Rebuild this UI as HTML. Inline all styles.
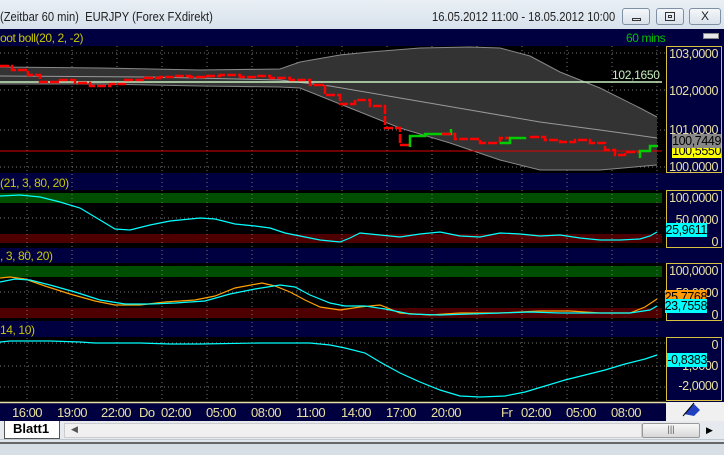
<!DOCTYPE html>
<html><head><meta charset="utf-8"><style>
*{margin:0;padding:0;box-sizing:border-box}
body{width:724px;height:455px;overflow:hidden;background:#dfe6ee;font-family:"Liberation Sans",sans-serif;position:relative}
.abs{position:absolute}
.title{left:0;top:0;width:724px;height:29px;background:linear-gradient(#e9eff5,#d8e2ec);font-size:13px;color:#222}
.title .t{transform:scaleX(0.86);transform-origin:left top;white-space:nowrap}
.btn{top:8px;width:28px;height:17px;border:1px solid #7f8fa4;border-radius:3px;background:linear-gradient(#f4f7fa,#d9e1ea)}
.hdr{background:#000040;color:#c8c800;font-size:12px;letter-spacing:-0.4px}
.ax{background:#000040;border:1px solid #d8c040;color:#e8e0a0;font-size:12.5px;letter-spacing:-0.4px}
.ax span{position:absolute;right:3px}
</style></head><body>
<div class="abs title">
 <div class="abs t" style="left:0;top:9px">(Zeitbar 60 min)&nbsp; EURJPY (Forex FXdirekt)</div>
 <div class="abs t" style="left:432px;top:9px">16.05.2012 11:00 - 18.05.2012 10:00</div>
 <div class="abs btn" style="left:622px"><div class="abs" style="left:9px;top:9px;width:9px;height:3px;border:1px solid #333"></div></div>
 <div class="abs btn" style="left:656px"><div class="abs" style="left:8px;top:3px;width:10px;height:9px;border:1px solid #333"><div style="margin:2px auto;width:4px;height:3px;border:1px solid #333"></div></div></div>
 <div class="abs btn" style="left:689px;width:32px;text-align:center;font-size:12px;line-height:15px">X</div>
</div>
<div class="abs" style="left:0;top:29px;width:724px;height:392px;background:#000040"></div>
<div class="abs hdr" style="left:0;top:31px;width:666px;height:15px;line-height:15px">oot boll(20, 2, -2)<span class="abs" style="left:626px;color:#00c000">60 mins</span></div>
<div class="abs" style="left:703px;top:33px;width:16px;height:6px;background:#e8e8e8;border:1px solid #888"></div>
<div class="abs hdr" style="left:0;top:176px;width:666px;height:14px;line-height:14px">(21, 3, 80, 20)</div>
<div class="abs hdr" style="left:0;top:250px;width:666px;height:13px;line-height:13px">, 3, 80, 20)</div>
<div class="abs hdr" style="left:0;top:324px;width:666px;height:13px;line-height:13px">14, 10)</div>

<svg class="abs" style="left:0;top:0" width="724" height="455">
<g fill="#000">
<rect x="0" y="46" width="666" height="127"/>
<rect x="0" y="190" width="666" height="58"/>
<rect x="0" y="263" width="666" height="58"/>
<rect x="0" y="337" width="666" height="65"/>
</g>
<rect x="0" y="193" width="662" height="10" fill="#004e00"/>
<rect x="0" y="234" width="662" height="9" fill="#4e0000"/>
<rect x="0" y="266" width="662" height="11" fill="#004e00"/>
<rect x="0" y="308" width="662" height="10" fill="#4e0000"/>
<g stroke="#777" stroke-dasharray="1,3" stroke-width="1">
<path d="M27 46V402M72 46V402M117 46V402M162 46V402M207 46V402M252 46V402M297 46V402M342 46V402M387 46V402M432 46V402M477 46V402M522 46V402M567 46V402M612 46V402M657 46V402"/>
<path d="M0 53H666M0 90H666M0 130H666M0 167H666M0 218H666M0 292H666M0 343H666M0 366H666M0 387H666"/>
</g>
<path d="M0 67 L100 68 L200 70 L280 69 L300 62 L340 55 L370 52 L420 48 L470 47 L500 48 L530 56 L560 72 L600 88 L640 108 L657 117 L657 165 L600 170 L540 170 L500 160 L450 143 L400 128 L370 116 L330 100 L300 88 L280 87 L200 86 L100 84 L0 84 Z" fill="#333"/>
<path d="M0 67 L100 68 L200 70 L280 69 L300 62 L340 55 L370 52 L420 48 L470 47 L500 48 L530 56 L560 72 L600 88 L640 108 L657 117" fill="none" stroke="#888"/>
<path d="M0 84 L100 84 L200 86 L280 87 L300 88 L330 100 L370 116 L400 128 L450 143 L500 160 L540 170 L600 170 L657 165" fill="none" stroke="#888"/>
<path d="M0 76 L150 77 L280 80 L330 86 L400 98 L470 110 L540 122 L600 130 L657 138" fill="none" stroke="#999"/>
<path d="M0 82H662" stroke="#c8f0c0" stroke-width="1.5"/>
<path d="M0 151H662" stroke="#e00000"/>
<path d="M0 66H12V70H28V75H40V82H60V80H75V83H90V86H110V84H125V80H145V78H160V77H175V76H190V77H205V76H220V75H240V77H255V76H270V78H290V80H310V85H325V95H340V104H355V100H370V106H385V128H400V145H410" fill="none" stroke="#f00" stroke-width="2.5" stroke-dasharray="9,2"/>
<path d="M410 147V136H425V134H440V134H451V129" fill="none" stroke="#0c0" stroke-width="2.5"/>
<path d="M442 134H455V139H480V143H500V138H512" fill="none" stroke="#f00" stroke-width="2.5" stroke-dasharray="9,2"/>
<path d="M500 143H510V138H525V137" fill="none" stroke="#0c0" stroke-width="2.5"/>
<path d="M530 137H545V140H560V142H575V140H590V143H605V150H615V155H625V152H640" fill="none" stroke="#f00" stroke-width="2.5" stroke-dasharray="9,2"/>
<path d="M640 158V151H650V146H658" fill="none" stroke="#0c0" stroke-width="2.5"/>
<path d="M0 196L20 195L40 197L60 202L80 208L100 220L115 229L130 230L150 225L170 221L200 218L215 219L235 224L255 226L270 228L285 233L305 237L320 240L340 242L350 238L360 233L380 235L400 237L420 234L440 232L460 236L480 237L500 233L520 234L540 236L560 235L580 238L600 240L620 240L640 239L650 236L657 232" fill="none" stroke="#0ff" stroke-width="1.2"/>
<path d="M0 278L10 277L25 279L45 286L70 294L95 301L115 305L140 305L165 302L195 300L215 296L235 288L262 283L275 286L290 292L305 300L320 307L340 310L360 307L380 305L400 313L430 315L460 313L500 313L540 311L570 311L600 313L630 313L645 307L657 299" fill="none" stroke="#ffa000" stroke-width="1.2"/>
<path d="M0 282L15 279L30 280L50 285L75 292L100 300L125 304L150 304L175 303L205 301L230 294L255 289L280 285L295 287L310 295L330 303L345 306L365 306L385 309L410 314L440 315L470 314L500 313L530 312L560 313L600 313L630 313L650 310L657 306" fill="none" stroke="#0ff" stroke-width="1.2"/>
<path d="M0 342L10 341L50 341L80 342L95 343L140 343L170 344L200 344L260 343L310 343L330 345L345 348L365 353L380 362L400 373L420 382L440 390L460 396L480 397L505 396L525 392L545 386L565 380L585 375L605 370L625 364L645 359L657 355" fill="none" stroke="#0ff" stroke-width="1.2"/>
<path d="M0 402.5H666" stroke="#e8e0a0" stroke-width="1.5"/>
<rect x="666" y="402" width="58" height="19" fill="#f0f0f0"/>
<path d="M684 414L694 404L700 410L694 416Z" fill="#2040c0"/><path d="M683 416L694 403" stroke="#000"/>
</svg>

<div class="abs" style="left:0;top:405px;width:666px;font-size:13px;color:#e8e0a0;letter-spacing:-0.5px;white-space:nowrap">
<span class="abs" style="left:12px">16:00</span><span class="abs" style="left:57px">19:00</span><span class="abs" style="left:101px">22:00</span><span class="abs" style="left:139px">Do</span><span class="abs" style="left:161px">02:00</span><span class="abs" style="left:206px">05:00</span><span class="abs" style="left:251px">08:00</span><span class="abs" style="left:296px">11:00</span><span class="abs" style="left:341px">14:00</span><span class="abs" style="left:386px">17:00</span><span class="abs" style="left:431px">20:00</span><span class="abs" style="left:501px">Fr</span><span class="abs" style="left:521px">02:00</span><span class="abs" style="left:566px">05:00</span><span class="abs" style="left:611px">08:00</span>
</div>
<div class="abs" style="left:612px;top:68px;font-size:12px;color:#c8f0c0;letter-spacing:-0.3px">102,1650</div>

<div class="abs ax" style="left:666px;top:46px;width:56px;height:127px">
<span style="top:0">103,0000</span><span style="top:37px">102,0000</span><span style="top:76px">101,0000</span><span style="top:113px">100,0000</span>
<span style="top:97px;right:0;background:#ff0;color:#000">100,5550</span>
<span style="top:87px;right:0;background:#888;color:#000">100,7449</span>
</div>
<div class="abs ax" style="left:666px;top:190px;width:56px;height:58px">
<span style="top:0">100,0000</span><span style="top:22px">50,0000</span><span style="top:44px">0</span>
<span style="top:32px;right:14px;background:#0ff;color:#000">25,9611</span>
</div>
<div class="abs ax" style="left:666px;top:263px;width:56px;height:58px">
<span style="top:0">100,0000</span><span style="top:22px">50,0000</span><span style="top:44px">0</span>
<span style="top:26px;right:14px;background:#f90;color:#000">25,7768</span>
<span style="top:35px;right:14px;background:#0ff;color:#000">23,7558</span>
</div>
<div class="abs ax" style="left:666px;top:337px;width:56px;height:64px">
<span style="top:0">0</span><span style="top:21px">-1,0000</span><span style="top:41px">-2,0000</span>
<span style="top:15px;right:14px;background:#0ff;color:#000">-0,8383</span>
</div>

<div class="abs" style="left:0;top:421px;width:724px;height:19px;background:#e6eaef;border-bottom:1px solid #c0c8d0"></div>
<div class="abs" style="left:4px;top:421px;width:56px;height:18px;background:#fff;border:1px solid #555;border-top:none;font-size:13px;font-weight:bold;padding-left:8px;line-height:16px">Blatt1</div>
<div class="abs" style="left:64px;top:423px;width:578px;height:15px;background:#f0f0f0;border:1px solid #ccc;font-size:9px;color:#555;padding-left:6px">◀</div>
<div class="abs" style="left:642px;top:423px;width:58px;height:15px;background:linear-gradient(#f8f8f8,#d8d8d8);border:1px solid #999;border-radius:2px;text-align:center;font-size:9px;color:#555">|||</div>
<div class="abs" style="left:706px;top:425px;font-size:9px">▶</div>
<div class="abs" style="left:0;top:442px;width:724px;height:13px;background:#d8dee6;border-top:2px solid #666"></div>
</body></html>
